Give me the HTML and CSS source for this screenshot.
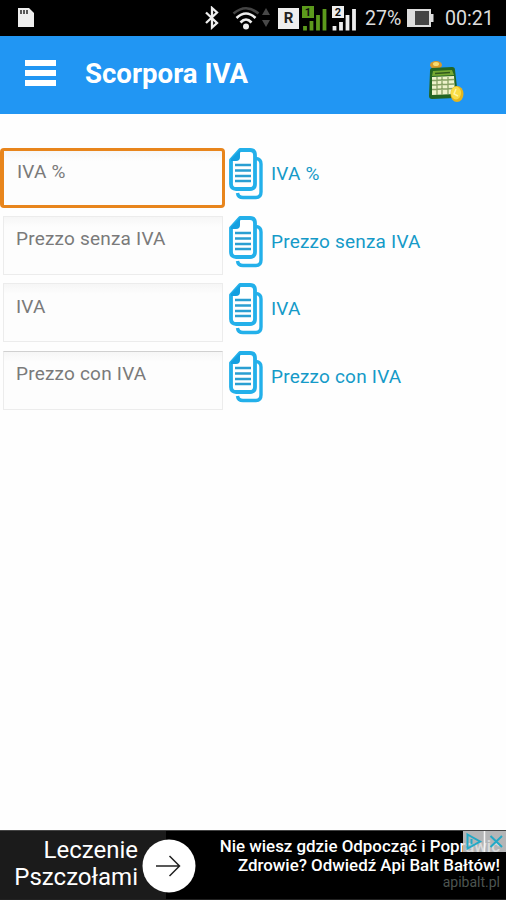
FILE: index.html
```html
<!DOCTYPE html>
<html lang="it">

<head>
  <meta charset="UTF-8" />
  <meta name="viewport" content="width=device-width, initial-scale=1.0" />
  <title>Scorpora IVA</title>
  <link rel="stylesheet" href="styles.css">
</head>

<body>

  <!-- Icona copia, usata in ogni riga -->
  <svg class="defs" width="0" height="0">
    <symbol id="copy" viewBox="0 0 34 52">
      <path d="M27 10.500Q32 11 32 16V44Q32 49.500 27 49.500H14Q9 49.500 8.500 45" fill="none" stroke="#23b0ea" stroke-width="3.400" />
      <path d="M11 2H21Q26 2 26 7V36Q26 41 21 41H7Q2 41 2 36V12Z" fill="#fff" stroke="#23b0ea" stroke-width="3.800" stroke-linejoin="round" />
      <path d="M11 2V9Q11 13 7 13H2V11Z" fill="#149fe0" />
      <path d="M6 17H22M6 22.500H22M6 28H22M6 33H22" stroke="#2a9fd2" stroke-width="2.500" />
    </symbol>
  </svg>

  <div class="status">
    <svg class="sd" width="18" height="20" viewBox="0 0 18 20">
      <path d="M1 0H12L17 5V19H1Z" fill="#eee" />
      <path d="M4 2V6M7 2V6M10 2V6" stroke="#333" stroke-width="1.600" />
    </svg>
    <svg class="bluetooth" width="14" height="24" viewBox="0 0 14 24">
      <path d="M1 6.500L12 17L7 21.500V2L12 6.500L1 17" fill="none" stroke="#eee" stroke-width="2.300" />
    </svg>
    <svg class="wifi" width="40" height="24" viewBox="0 0 40 24">
      <g fill="none" stroke-width="2.600">
        <path d="M1.500 7.500Q14 -3 26.500 7.500" stroke="#444" />
        <path d="M4.500 12Q14 3 23.500 12M8.500 16.500Q14 10.500 19.500 16.500" stroke="#eee" />
      </g>
      <circle cx="14" cy="20.500" r="3" fill="#eee" />
      <path d="M30 9L34 2L38 9ZM30 14H38L34 21Z" fill="#484848" />
    </svg>
    <span class="roaming">R</span>
    <svg class="signal1" width="26" height="25" viewBox="0 0 26 25">
      <rect width="12" height="12" fill="#5c9a1c" />
      <text x="6" y="10" class="sim">1</text>
      <path d="M3 22.500V22M9.500 22.500V17M16 22.500V11M22.500 22.500V5" stroke="#5c9a1c" stroke-width="3.800" stroke-linecap="square" />
    </svg>
    <svg class="signal2" width="26" height="25" viewBox="0 0 26 25">
      <rect width="12" height="12" fill="#eee" />
      <text x="6" y="10" class="sim">2</text>
      <path d="M2.500 22.500V22M9 22.500V18M15.500 22.500V11M22 22.500V5" stroke="#eee" stroke-width="3.800" stroke-linecap="square" />
    </svg>
    <span class="percent">27%</span>
    <svg class="battery" width="28" height="20" viewBox="0 0 28 20">
      <path d="M1 1H25V6H27.500V14H25V19H1Z" fill="#ddd" />
      <rect x="9" y="3" width="14" height="14" fill="#444" />
    </svg>
    <span class="clock">00:21</span>
  </div>

  <header>
    <div class="menu"><i></i><i></i><i></i></div>
    <h1>Scorpora IVA</h1>
    <svg class="calc" width="38" height="44" viewBox="0 0 38 44">
      <ellipse cx="8" cy="5" rx="6" ry="4" fill="#d79a2d" />
      <ellipse cx="8" cy="4" rx="3" ry="2" fill="#f8dc72" />
      <path d="M4 8L24 7Q27 7 27 10L30 36Q30 38 27 38L4 39Q1 39 1 36L2 11Q2 8 4 8Z" fill="#226522" />
      <path d="M5 11L24 10L26 15L4 16Z" fill="#75a833" />
      <path d="M7 13.500L22 12.500" stroke="#31591d" stroke-width="1.500" />
      <path d="M4 17L26 16L27 34L4 35Z" fill="#eef3cb" />
      <path d="M4 20.500L26 19.500M4 25L26 24M4 29.500L26 28.500M9 17V35M14 17V35M20 17V34" stroke="#87a164" stroke-width="1.300" />
      <ellipse cx="29" cy="34" rx="6.500" ry="8" fill="#e3b51e" />
      <ellipse cx="28" cy="33" rx="5" ry="6.500" fill="#f9dd45" />
      <path d="M28 29L26 34L30 36" fill="none" stroke="#fff3a0" stroke-width="1.500" />
    </svg>
  </header>

  <main>
    <div class="row">
      <input class="active" type="text" placeholder="IVA %" />
      <svg class="copy"><use href="#copy" /></svg>
      <span class="label">IVA %</span>
    </div>
    <div class="row">
      <input type="text" placeholder="Prezzo senza IVA" />
      <svg class="copy"><use href="#copy" /></svg>
      <span class="label">Prezzo senza IVA</span>
    </div>
    <div class="row">
      <input type="text" placeholder="IVA" />
      <svg class="copy"><use href="#copy" /></svg>
      <span class="label">IVA</span>
    </div>
    <div class="row">
      <input class="dark" type="text" placeholder="Prezzo con IVA" />
      <svg class="copy"><use href="#copy" /></svg>
      <span class="label">Prezzo con IVA</span>
    </div>
  </main>

  <!-- Banner -->
  <footer>
    <div class="ad-title">Leczenie<br>Pszczołami</div>
    <svg class="arrow" width="54" height="54" viewBox="0 0 54 54">
      <circle cx="27" cy="27" r="26.500" fill="#fff" />
      <path d="M14 27H37M27.500 17L37.500 27L27.500 37" fill="none" stroke="#222" stroke-width="1.500" />
    </svg>
    <div class="ad-text">
      <p>Nie wiesz gdzie Odpocząć i Poprawić<br>Zdrowie? Odwiedź Api Balt Bałtów!</p>
      <small>apibalt.pl</small>
    </div>
    <svg class="choices" width="43" height="21" viewBox="0 0 43 21">
      <rect width="43" height="21" fill="#d3d5d6" fill-opacity="0.850" />
      <path d="M21.500 0V21" stroke="#f4f4f4" stroke-width="1.500" />
      <path d="M4.500 3.500L17 10.500L4.500 17.500ZM8.500 8V13.500" fill="none" stroke="#22a9c6" stroke-width="2" />
      <path d="M27.500 5L39 16M39 5L27.500 16" stroke="#22a9c6" stroke-width="2" />
    </svg>
  </footer>

</body>

</html>
```
FILE: styles.css
```css
* {
  box-sizing: border-box;
}

body {
  margin: 0;
  height: 900px;
  display: flex;
  flex-direction: column;
  background: #fefefe;
  font-family: Roboto, sans-serif;
  overflow: hidden;
}

.defs {
  display: none;
}

.status {
  height: 36px;
  flex: none;
  display: flex;
  align-items: center;
  background: #000;
  color: #ddd;
  font-size: 19.6px;
  white-space: nowrap;
}

.sd {
  margin-left: 17px;
}

.bluetooth {
  margin-left: 170px;
}

.wifi {
  margin-left: 13px;
}

.roaming {
  width: 21px;
  height: 21px;
  margin-left: 6px;
  background: #eee;
  color: #222;
  font-size: 15px;
  font-weight: bold;
  line-height: 21px;
  text-align: center;
}

.signal1 {
  margin-left: 3px;
}

.signal2 {
  margin-left: 4px;
}

.sim {
  font-size: 11px;
  font-weight: bold;
  text-anchor: middle;
  fill: #111;
}

.percent {
  width: 38px;
  margin-left: 7px;
  padding-top: 1px;
}

.battery {
  margin-left: 3px;
}

.clock {
  margin-left: 11px;
  padding-top: 1px;
}

header {
  height: 78px;
  flex: none;
  display: flex;
  align-items: center;
  background: #2196f3;
  color: #fff;
}

.menu {
  width: 31px;
  margin: 0 29px 4px 25px;
}

.menu i {
  display: block;
  height: 6px;
  background: #fff;
}

.menu i + i {
  margin-top: 4px;
}

h1 {
  width: 343px;
  margin: 0 0 3px;
  font-size: 27.6px;
  font-weight: bold;
}

.calc {
  margin-top: 14px;
}

main {
  flex: 1;
  padding-top: 34px;
}

.row {
  height: 67.5px;
  display: flex;
  align-items: flex-start;
}

input {
  width: 220px;
  height: 59px;
  margin: 0 6px 0 3px;
  padding: 0 12px 13px;
  border: 1px solid #ececec;
  background: linear-gradient(#f6f6f6, #fdfdfd 10px);
  font-family: inherit;
  font-size: 19px;
  letter-spacing: 0.2px;
  outline: none;
}

input::placeholder {
  color: #7a7a7a;
}

.dark {
  border-top-color: #d0d0d0;
}

.active {
  width: 225px;
  height: 60px;
  margin: 0 4px 0 0;
  padding: 0 13px 14px;
  border: 3px solid #e8851c;
  border-left-width: 4px;
  border-radius: 4px;
}

.copy {
  width: 34px;
  height: 52px;
}

.label {
  margin: 14px 0 0 8px;
  color: #159ac8;
  font-size: 19px;
  line-height: 24px;
  letter-spacing: 0.2px;
}

footer {
  position: relative;
  height: 70px;
  flex: none;
  display: flex;
  background: linear-gradient(90deg, #1b1b1b 166px, #000 166px);
  border-top: 1px solid #444;
  border-bottom: 1px solid #222;
  color: #fff;
}

.ad-title {
  width: 138px;
  padding-top: 6px;
  font-size: 24px;
  line-height: 27px;
  text-align: right;
}

.arrow {
  margin: 8px 0 0 4px;
}

.ad-text {
  flex: 1;
  padding: 6px 6px 0 0;
  text-align: right;
  white-space: nowrap;
}

.ad-text p {
  margin: 0;
  font-size: 16.9px;
  font-weight: 500;
  line-height: 19px;
}

.ad-text small {
  display: block;
  color: #4d5551;
  font-size: 14px;
  line-height: 14px;
}

.choices {
  position: absolute;
  top: 0;
  right: 0;
}
```
